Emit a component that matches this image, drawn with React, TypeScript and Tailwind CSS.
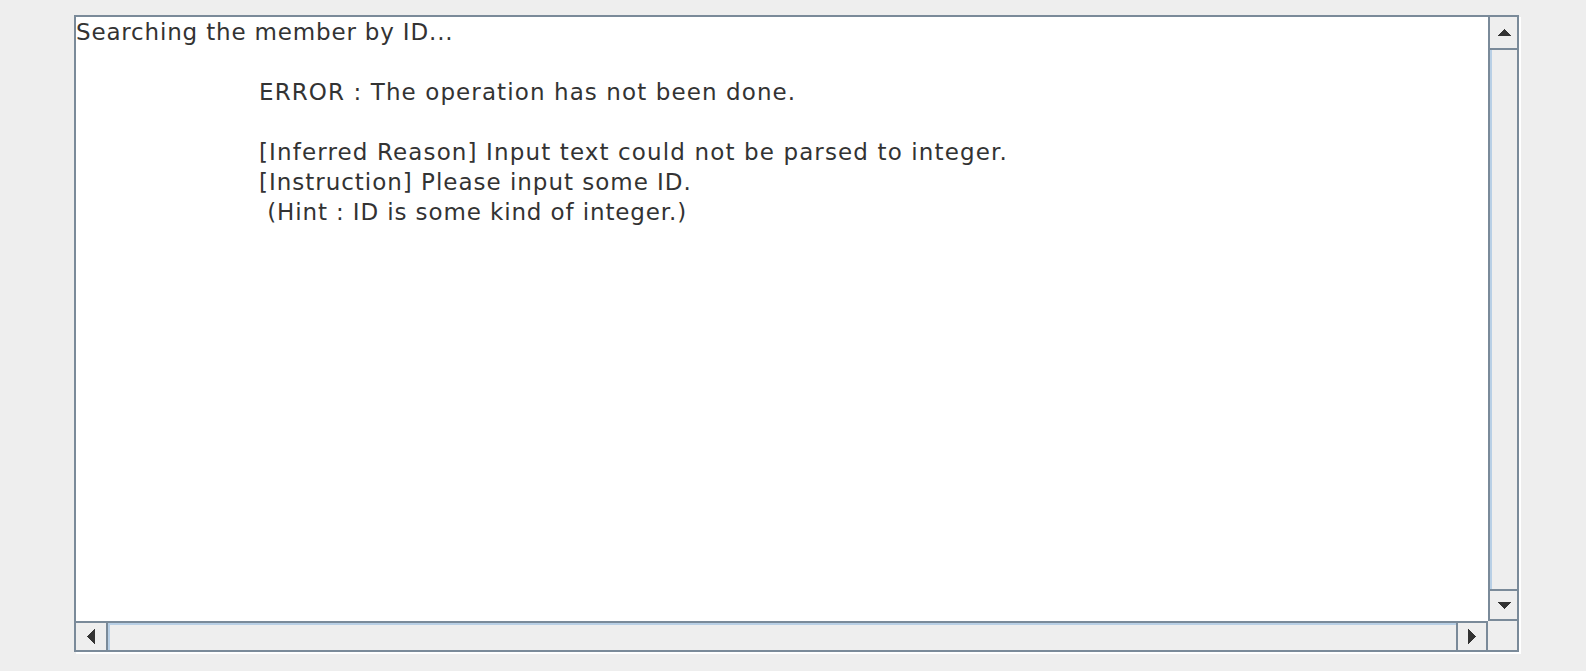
import React from "react";

// Metal-style scroll pane holding a plain text area
const lines: Array<{ text: string; indent?: boolean; cls: string }> = [
  { text: "Searching the member by ID...", cls: "tracking-[0.83px]" },
  { text: "", cls: "" },
  { text: "ERROR : The operation has not been done.", indent: true, cls: "tracking-[1.1px]" },
  { text: "", cls: "" },
  { text: "[Inferred Reason] Input text could not be parsed to integer.", indent: true, cls: "tracking-[1.13px]" },
  { text: "[Instruction] Please input some ID.", indent: true, cls: "tracking-[0.98px]" },
  { text: " (Hint : ID is some kind of integer.)", indent: true, cls: "tracking-[0.88px]" },
];

function Arrow({ dir }: { dir: "up" | "down" | "left" | "right" }) {
  const horiz = dir === "left" || dir === "right";
  const w = horiz ? 8 : 14;
  const h = horiz ? 15 : 7;
  const pts =
    dir === "up" ? "7,0 14,7 0,7"
    : dir === "down" ? "0,0 14,0 7,7"
    : dir === "left" ? "8,0 8,15 0,7.5"
    : "0,0 8,7.5 0,15";
  return (
    <svg width={w} height={h} viewBox={`0 0 ${w} ${h}`} shapeRendering="crispEdges">
      <polygon points={pts} fill="#333333" />
    </svg>
  );
}

export default function App() {
  return (
    <div className="w-[1586px] h-[671px] bg-[#eeeeee] pt-[15px] pl-[74px]">
      <div className="w-[1445px] h-[637px] border-2 border-[#7a8a99] shadow-[2px_2px_0_0_#ffffff] flex flex-col">
        {/* viewport + vertical bar */}
        <div className="flex h-[604px]">
          <div
            className="flex-1 bg-white text-[#333333] text-[23px] leading-[30px] overflow-hidden"
            style={{ fontFamily: '"DejaVu Sans", sans-serif' }}
          >
            {lines.map((l, i) => (
              <div key={i} className={`whitespace-pre h-[30px] ${l.cls} ${l.indent ? "pl-[183px]" : ""}`}>
                {l.text}
              </div>
            ))}
          </div>
          <div className="w-[29px] border-l-2 border-[#7a8a99] bg-[#eeeeee] flex flex-col">
            <div className="h-[33px] border-b-2 border-[#7a8a99] flex items-center justify-center">
              <Arrow dir="up" />
            </div>
            <div className="flex-1 border-l-2 border-[#b8cfe5]" />
            <div className="h-[32px] border-t-2 border-b-2 border-[#7a8a99] flex items-center justify-center">
              <Arrow dir="down" />
            </div>
          </div>
        </div>
        {/* horizontal bar + corner */}
        <div className="flex h-[29px]">
          <div className="w-[1412px] flex border-t-2 border-[#7a8a99] bg-[#eeeeee]">
            <div className="w-[32px] border-r-2 border-[#7a8a99] flex items-center justify-center">
              <Arrow dir="left" />
            </div>
            <div className="flex-1 border-t-2 border-l-2 border-[#b8cfe5]" />
            <div className="w-[32px] border-l-2 border-r-2 border-[#7a8a99] flex items-center justify-center">
              <Arrow dir="right" />
            </div>
          </div>
          <div className="flex-1 bg-[#eeeeee]" />
        </div>
      </div>
    </div>
  );
}
